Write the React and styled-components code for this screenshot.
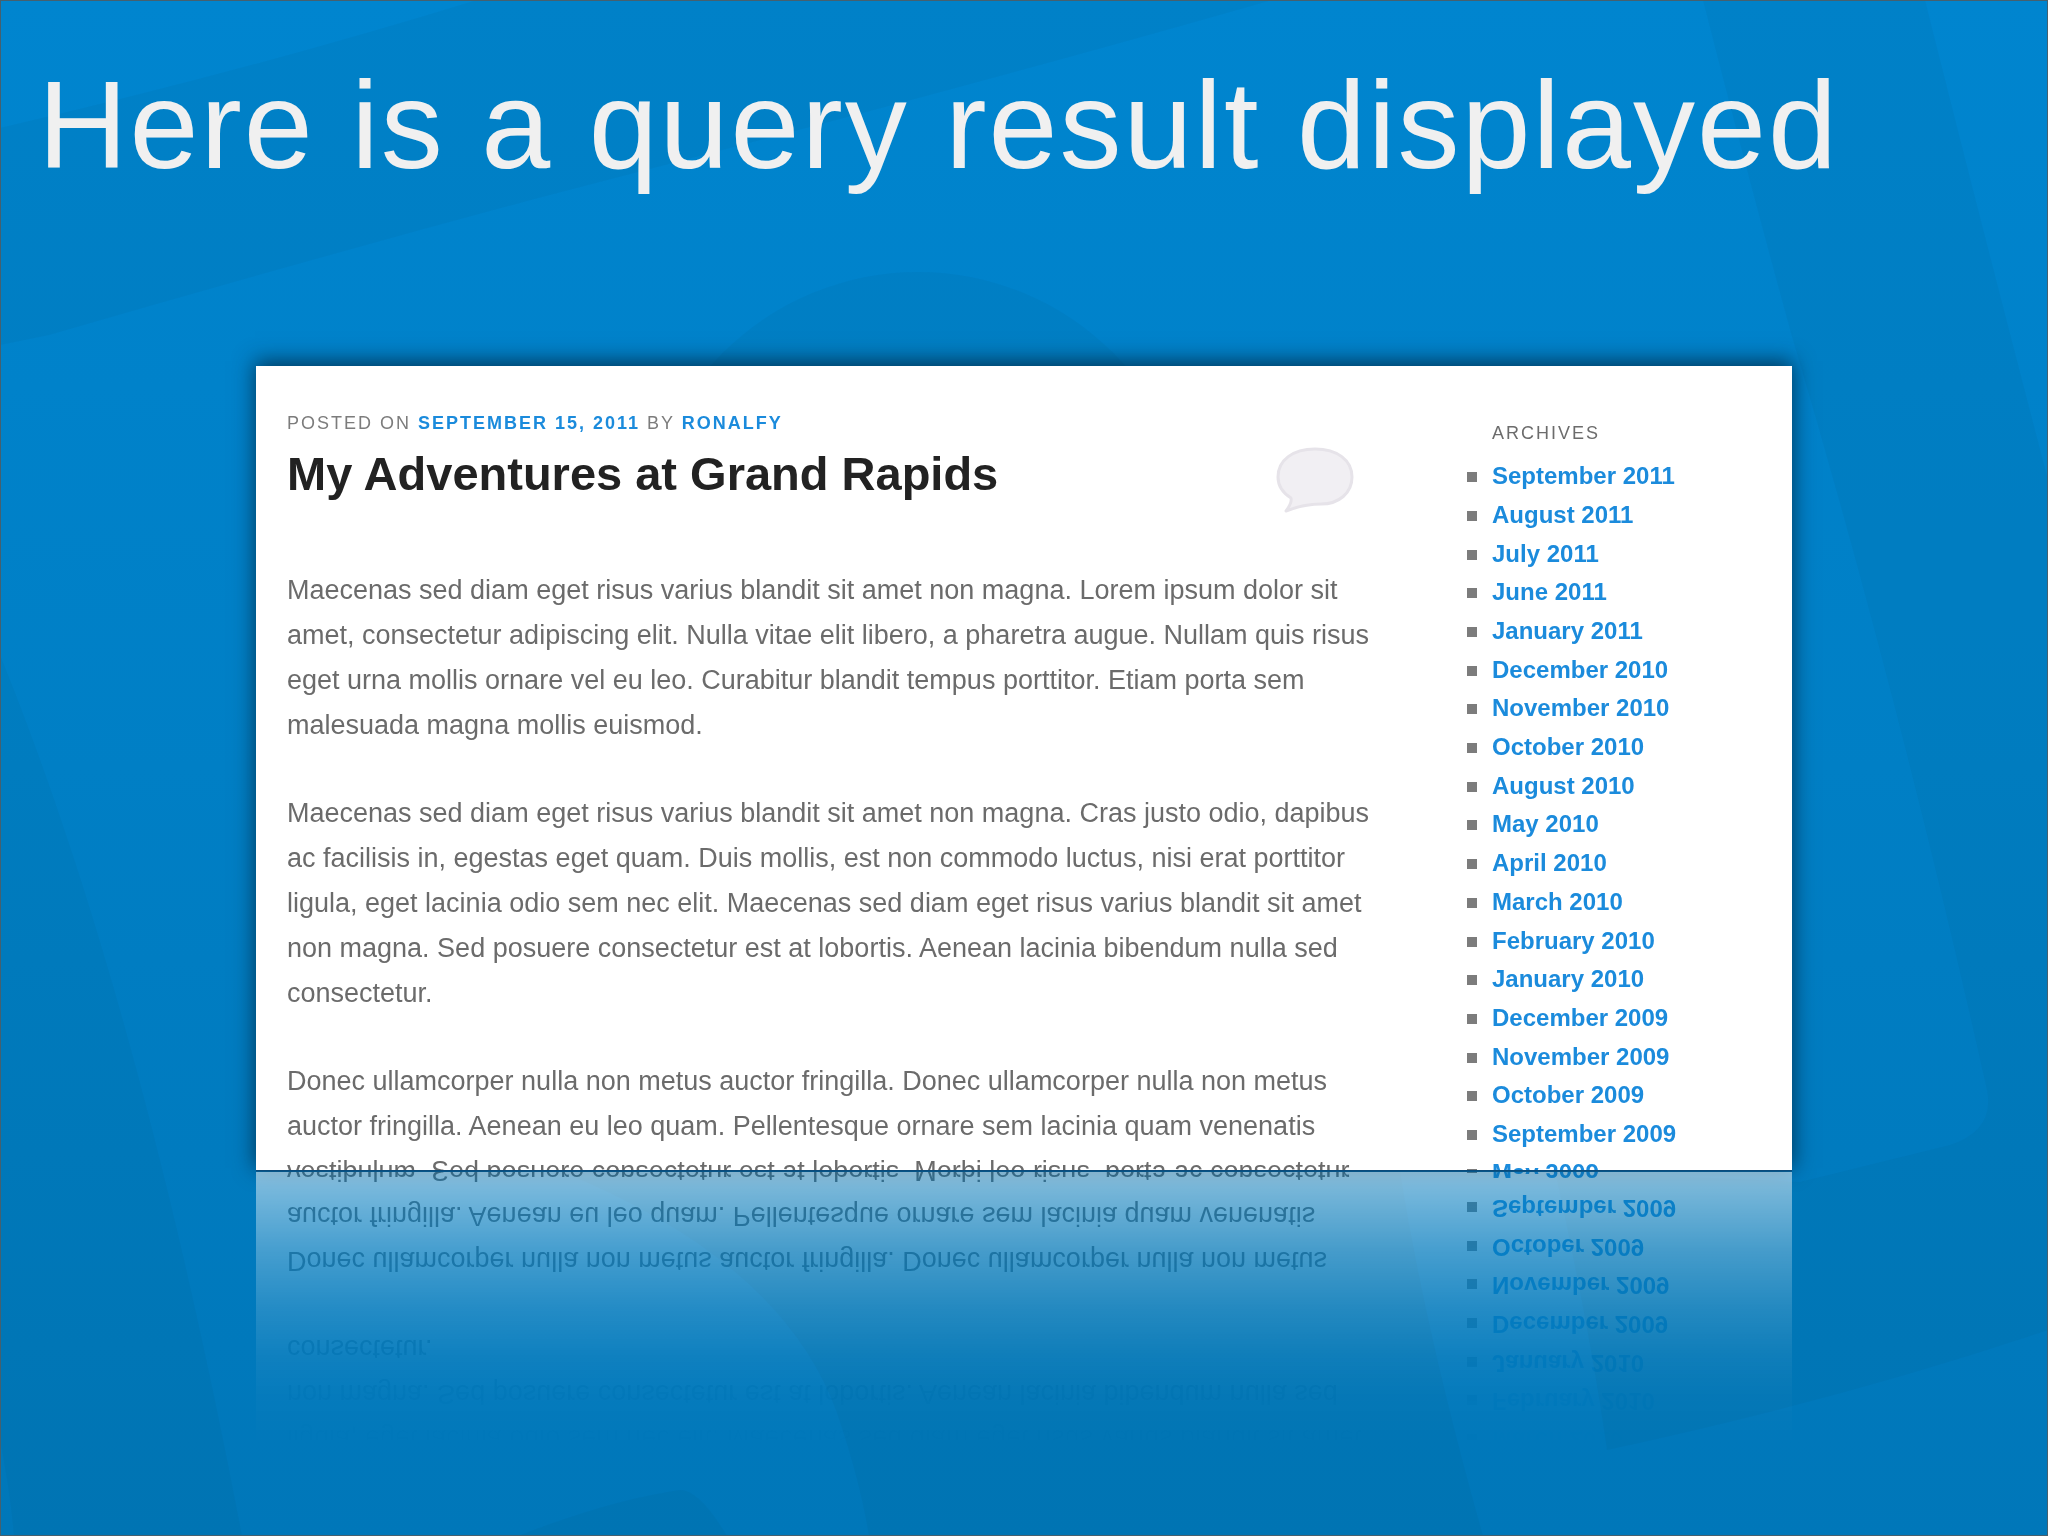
import React from 'react';
import styled, { createGlobalStyle } from 'styled-components';

const Global = createGlobalStyle`
  * { box-sizing: border-box; margin: 0; padding: 0; }
  body { margin: 0; background: #007cc2; }
`;

const Slide = styled.main`
  position: relative;
  min-height: 100vh;
  overflow: hidden;
  background: linear-gradient(#0085cf, #007fc5 50%, #0077b9);
  font-family: "Liberation Sans", Arial, sans-serif;

  &::after {
    content: "";
    position: absolute;
    inset: 0;
    border: 1px solid #46606e;
    pointer-events: none;
  }
`;

const Backdrop = styled.svg`
  position: absolute;
  inset: 0;
  width: 100%;
  height: 100%;
`;

const Content = styled.div`
  position: relative;
  display: flex;
  flex-direction: column;
`;

const SlideTitle = styled.h1`
  padding: 51px 38px 0;
  font-size: 124px;
  line-height: 148px;
  letter-spacing: 2px;
  font-weight: 400;
  color: #f0f0f0;
`;

const Frame = styled.div`
  width: 75%;
  margin: 167px auto 0;
  box-shadow: 0 -4px 20px 1px rgba(0, 28, 48, 0.7);
`;

const Page = styled.div`
  display: grid;
  grid-template-columns: minmax(0, 1fr) 334px;
  height: 805px;
  padding-left: 31px;
  overflow: hidden;
  background: #fff;
  border-bottom: 1px solid #0a4a7a;
  -webkit-box-reflect: below 0 linear-gradient(
    transparent 66%,
    rgba(0, 0, 0, 0.02) 72%,
    rgba(0, 0, 0, 0.06) 77%,
    rgba(0, 0, 0, 0.14) 83%,
    rgba(0, 0, 0, 0.27) 90%,
    rgba(0, 0, 0, 0.42) 96%,
    rgba(0, 0, 0, 0.52) 100%
  );
`;

const Article = styled.article`
  padding-top: 43px;
`;

const Meta = styled.p`
  font-size: 18px;
  line-height: 28px;
  letter-spacing: 2px;
  text-transform: uppercase;
  color: #7c7c7c;
`;

const Link = styled.a`
  color: #1b8bdc;
  font-weight: 700;
  text-decoration: none;
`;

const TitleRow = styled.header`
  display: flex;
  justify-content: space-between;
  padding-right: 104px;
`;

const PostTitle = styled.h2`
  font-size: 47px;
  line-height: 74px;
  color: #222;
`;

const Bubble = styled.svg`
  width: 78px;
  height: 66px;
  margin-top: 10px;
`;

const Body = styled.div`
  display: flex;
  flex-direction: column;
  gap: 43px;
  padding-top: 55px;
`;

const Paragraph = styled.p`
  font-size: 27px;
  line-height: 45px;
  color: #6b6b6b;
  white-space: nowrap;
`;

const Line = styled.span`
  display: block;
`;

const Sidebar = styled.aside`
  padding: 53px 0 0 34px;
`;

const SidebarTitle = styled.h3`
  font-size: 18px;
  line-height: 28px;
  letter-spacing: 2px;
  font-weight: 400;
  text-transform: uppercase;
  color: #6c6c6c;
`;

const Archive = styled.ul`
  display: grid;
  grid-auto-rows: 1fr;
  height: 735px;
  margin-top: 10px;
  list-style: none;
`;

const ArchiveItem = styled.li`
  display: flex;
  align-items: center;
  gap: 15px;
  margin-left: -25px;
  font-size: 24px;
  line-height: 38px;

  &::before {
    content: "";
    width: 10px;
    height: 10px;
    margin-top: 2px;
    background: #7c7c7c;
  }
`;

const paragraphs = [
  [
    'Maecenas sed diam eget risus varius blandit sit amet non magna. Lorem ipsum dolor sit',
    'amet, consectetur adipiscing elit. Nulla vitae elit libero, a pharetra augue. Nullam quis risus',
    'eget urna mollis ornare vel eu leo. Curabitur blandit tempus porttitor. Etiam porta sem',
    'malesuada magna mollis euismod.',
  ],
  [
    'Maecenas sed diam eget risus varius blandit sit amet non magna. Cras justo odio, dapibus',
    'ac facilisis in, egestas eget quam. Duis mollis, est non commodo luctus, nisi erat porttitor',
    'ligula, eget lacinia odio sem nec elit. Maecenas sed diam eget risus varius blandit sit amet',
    'non magna. Sed posuere consectetur est at lobortis. Aenean lacinia bibendum nulla sed',
    'consectetur.',
  ],
  [
    'Donec ullamcorper nulla non metus auctor fringilla. Donec ullamcorper nulla non metus',
    'auctor fringilla. Aenean eu leo quam. Pellentesque ornare sem lacinia quam venenatis',
    'vestibulum. Sed posuere consectetur est at lobortis. Morbi leo risus, porta ac consectetur',
  ],
];

const months = [
  'September 2011', 'August 2011', 'July 2011', 'June 2011', 'January 2011',
  'December 2010', 'November 2010', 'October 2010', 'August 2010', 'May 2010',
  'April 2010', 'March 2010', 'February 2010', 'January 2010', 'December 2009',
  'November 2009', 'October 2009', 'September 2009', 'May 2009',
];

export default function App() {
  return (
    <Slide>
      <Global />
      <Backdrop viewBox="0 0 2048 1536" preserveAspectRatio="none" aria-hidden="true">
        <g fill="#005078" fillOpacity="0.07">
          <path d="M0 128 Q250 70 477 0 H1272 Q980 84 542 197 Q300 262 49 335 L0 345 Z" />
          <path d="M1703 0 H1925 Q1975 200 2048 480 V1330 Q1840 1400 1607 1450 Q1590 1330 1555 1171 L1800 1182 L1950 1145 Q1995 1130 1987 1090 Q1900 700 1791 333 Q1749 180 1703 0 Z" />
          <path d="M0 655 Q140 1000 242 1536 H14 Q10 1490 0 1440 Z" />
          <path d="M560 1171 Q780 1260 836 1410 Q860 1480 869 1536 H1483 Q1425 1330 1400 1171 Z" />
          <path d="M518 1536 Q610 1500 680 1490 Q700 1490 727 1536 Z" />
          <circle cx="918" cy="548" r="276" />
        </g>
      </Backdrop>
      <Content>
        <SlideTitle>Here is a query result displayed</SlideTitle>
        <Frame>
          <Page>
            <Article>
              <Meta>
                Posted on <Link href="#date">September 15, 2011</Link> by <Link href="#author">ronalfy</Link>
              </Meta>
              <TitleRow>
                <PostTitle>My Adventures at Grand Rapids</PostTitle>
                <Bubble viewBox="0 0 78 66" aria-hidden="true">
                  <path
                    d="M39 2 C61 2 76 13 76 30 C76 46 63 57 45 57 C31 57 20 60 10 64 C13 60 16 55 15 51 C7 46 2 39 2 30 C2 13 17 2 39 2 Z"
                    fill="#f1eff3"
                    stroke="#e6e3e9"
                    strokeWidth="3"
                    strokeLinejoin="round"
                  />
                </Bubble>
              </TitleRow>
              <Body>
                {paragraphs.map((lines) => (
                  <Paragraph key={lines[0]}>
                    {lines.map((line) => (
                      <Line key={line}>{line}</Line>
                    ))}
                  </Paragraph>
                ))}
              </Body>
            </Article>
            <Sidebar>
              <SidebarTitle>Archives</SidebarTitle>
              <Archive>
                {months.map((month) => (
                  <ArchiveItem key={month}>
                    <Link href="#archive">{month}</Link>
                  </ArchiveItem>
                ))}
              </Archive>
            </Sidebar>
          </Page>
        </Frame>
      </Content>
    </Slide>
  );
}
